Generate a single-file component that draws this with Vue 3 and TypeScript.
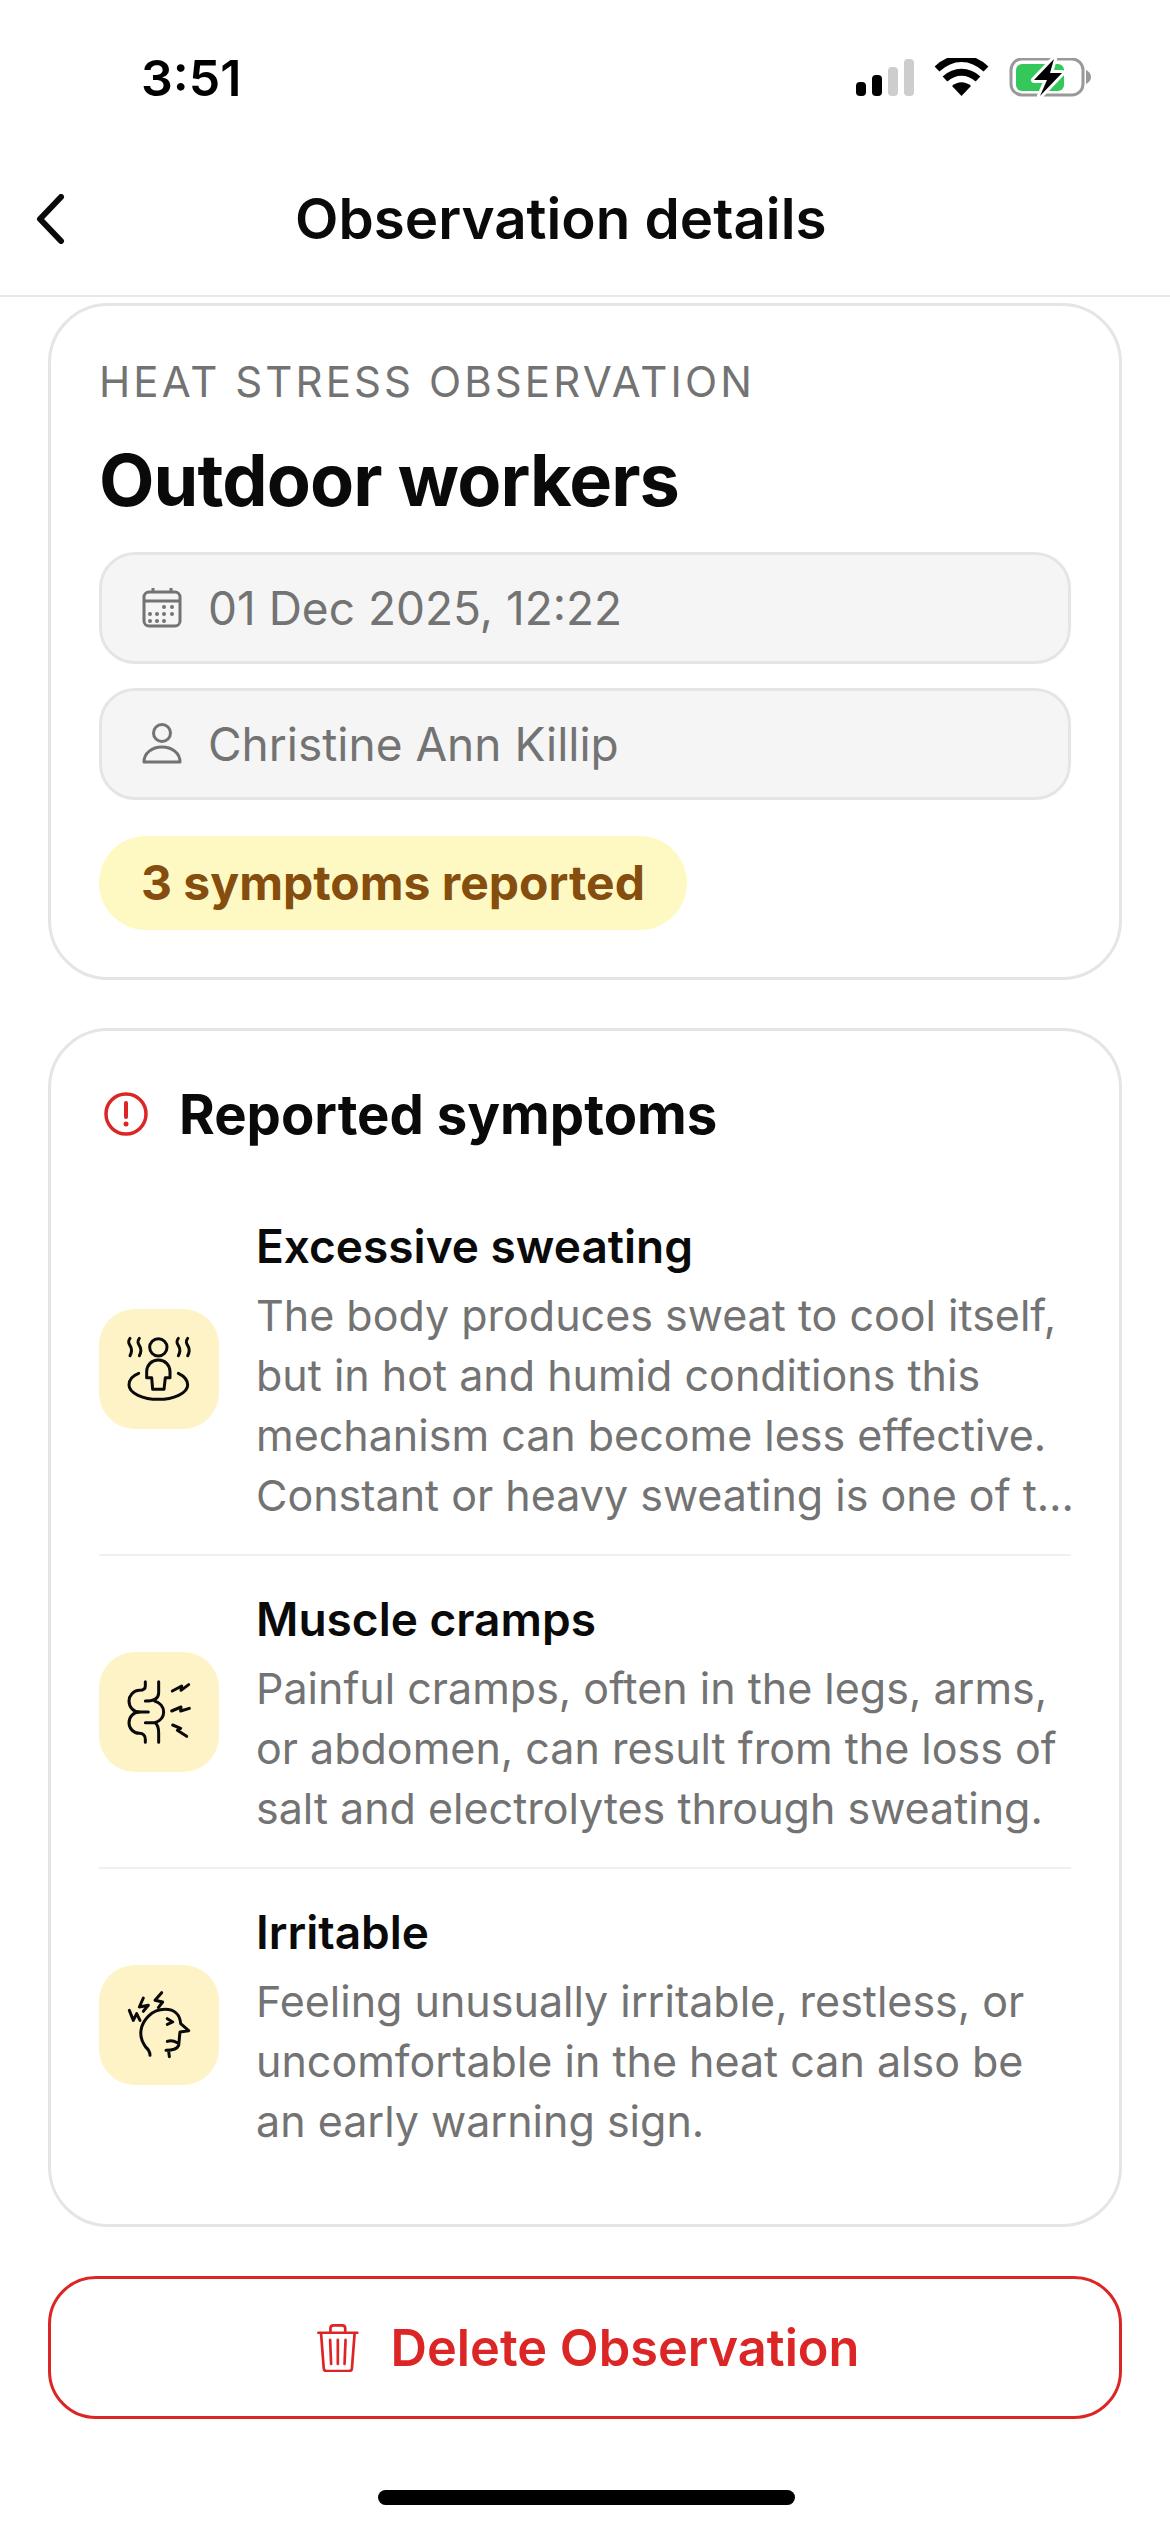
<template>
  <div class="screen">
    <div class="status">
      <span class="status__time">3:51</span>
      <svg class="status__icons" width="235" height="40" viewBox="856 58 235 40">
        <rect x="856" y="82" width="10" height="14" rx="4" fill="#000" />
        <rect x="872" y="75" width="10" height="21" rx="4" fill="#000" />
        <rect x="888" y="67" width="10" height="29" rx="4" fill="#cdcdcd" />
        <rect x="904" y="59" width="10" height="37" rx="4" fill="#cdcdcd" />
        <path d="M937 69 C952 55 971 55 986 69 M945 79 C955 70 968 70 978 79" fill="none" stroke="#000" stroke-width="7" />
        <path d="M952 86 C958 81 965 81 971 86 L961.500 96 Z" fill="#000" />
        <rect x="1011" y="59" width="72" height="36" rx="11" fill="none" stroke="#999" stroke-width="3" />
        <path d="M1086 70 C1090 72 1091 75 1091 77 C1091 79 1090 82 1086 84 Z" fill="#999" />
        <rect x="1016" y="64" width="48" height="27" rx="6" fill="#34c759" />
        <path d="M1054 59 L1034 80 H1047 L1040 96 L1062 73 H1050 Z" fill="#000" stroke="#fff" stroke-width="6" paint-order="stroke" stroke-linejoin="round" />
      </svg>
    </div>

    <header class="nav">
      <svg class="nav__back" width="30" height="50" viewBox="0 0 30 50">
        <path d="M26 3 L5 25 L26 47" fill="none" stroke="#0a0a0a" stroke-width="6" stroke-linecap="round" stroke-linejoin="round" />
      </svg>
      <h1 class="nav__title">Observation details</h1>
    </header>

    <main class="content">
      <section class="card card--summary">
        <div class="eyebrow">HEAT STRESS OBSERVATION</div>
        <h2 class="name">Outdoor workers</h2>
        <div class="field">
          <svg width="42" height="42" viewBox="0 0 42 42" fill="none" stroke="#737373" stroke-width="3">
            <rect x="3" y="5" width="36" height="34" rx="5" />
            <path d="M3 14 H39 M12 1 V6 M30 1 V6" />
            <g fill="#737373" stroke="none">
              <circle cx="23" cy="20" r="2" /><circle cx="31" cy="20" r="2" />
              <circle cx="9" cy="27" r="2" /><circle cx="16" cy="27" r="2" /><circle cx="23" cy="27" r="2" /><circle cx="31" cy="27" r="2" />
              <circle cx="9" cy="34" r="2" /><circle cx="16" cy="34" r="2" /><circle cx="23" cy="34" r="2" />
            </g>
          </svg>
          <span>01 Dec 2025, 12:22</span>
        </div>
        <div class="field">
          <svg width="42" height="42" viewBox="0 0 42 42" fill="none" stroke="#737373" stroke-width="3">
            <circle cx="21" cy="10" r="8.500" />
            <path d="M3 39 C3 30 11 24 21 24 C31 24 39 30 39 39 Z" stroke-linejoin="round" />
          </svg>
          <span>Christine Ann Killip</span>
        </div>
        <div class="badge">3 symptoms reported</div>
      </section>

      <section class="card card--symptoms">
        <div class="heading">
          <svg width="44" height="44" viewBox="0 0 44 44" fill="none">
            <circle cx="22" cy="22" r="20" stroke="#dc2626" stroke-width="3.500" />
            <path d="M22 11 V25" stroke="#dc2626" stroke-width="4" stroke-linecap="round" />
            <circle cx="22" cy="32" r="2.500" fill="#dc2626" />
          </svg>
          <h3>Reported symptoms</h3>
        </div>

        <div v-for="item in symptoms" :key="item.title" class="symptom">
          <div class="symptom__icon">
            <svg v-if="item.icon === 'sweat'" width="120" height="120" viewBox="57 57 360 360" v-bind="iconAttrs">
              <circle cx="235" cy="172" r="26" />
              <path d="M218 298 L215 263 H200 V245 C200 225 215 210 235 210 C255 210 270 225 270 245 V263 H256 L252 298 Z" />
              <path d="M176 250 C155 258 147 272 147 285 C147 310 190 328 235 328 C280 328 323 310 323 285 C323 272 312 258 295 250" />
              <path d="M150 145 C142 155 147 162 152 170 C157 180 155 188 150 197 M178 145 C170 155 175 162 180 170 C185 180 183 188 178 197" />
              <path d="M295 145 C287 155 292 162 297 170 C302 180 300 188 295 197 M323 145 C315 155 320 162 325 170 C330 180 328 188 323 197" />
            </svg>
            <svg v-else-if="item.icon === 'cramp'" width="120" height="120" viewBox="57 33 360 360" v-bind="iconAttrs">
              <path d="M196 122 V135 C196 145 188 148 178 148 C160 148 147 165 147 180 C147 198 160 213 178 213 H205" />
              <path d="M178 213 C160 213 147 228 147 245 C147 262 160 277 178 277 C190 277 196 285 196 295 V304" />
              <path d="M236 122 V155 C236 172 220 180 196 180 M224 180 C240 185 251 198 251 213 C251 228 240 240 225 245 H196 M225 245 C232 250 236 262 236 275 V304" />
              <path d="M277 150 L305 135 L303 148 L326 131 M275 210 L303 198 L302 210 L328 202 M278 252 L302 262 L292 268 L320 286" />
            </svg>
            <svg v-else width="120" height="120" viewBox="57 39 360 360" v-bind="iconAttrs">
              <path d="M210 310 C210 298 205 292 197 285 C186 270 180 255 183 235 C187 205 215 172 255 172 C285 172 300 190 302 215 L326 236 L300 240 C298 255 298 265 296 280 C290 295 270 295 258 295 M268 314 L266 297" />
              <path d="M262 200 L278 210 L262 217 M262 268 C272 264 282 266 292 272" />
              <path d="M148 175 L160 205 L170 185 L180 205 M190 138 L178 165 L205 160 L190 178 M245 122 L225 145 L248 150 L235 167" />
            </svg>
          </div>
          <div class="symptom__text">
            <div class="symptom__title">{{ item.title }}</div>
            <p class="symptom__desc">{{ item.desc }}</p>
          </div>
        </div>
      </section>

      <button class="delete">
        <svg width="42" height="48" viewBox="118 133 125 143" fill="none" stroke="#dc2626" stroke-width="8" stroke-linecap="round" stroke-linejoin="round">
          <path d="M122 159 H238 M130 160 L138 265 C138 270 142 273 147 273 H213 C218 273 222 270 222 265 L230 160" />
          <path d="M158 158 V146 C158 140 162 137 167 137 H193 C198 137 202 140 202 146 V158" />
          <path d="M157 180 L160 252 M180 180 V252 M203 180 L200 252" />
        </svg>
        <span>Delete Observation</span>
      </button>
    </main>

    <div class="home"></div>
  </div>
</template>

<script setup lang="ts">
interface ISymptom {
  title: string
  desc: string
  icon: 'sweat' | 'cramp' | 'irritable'
}

const iconAttrs = {
  fill: 'none',
  stroke: '#0a0a0a',
  'stroke-width': 9,
  'stroke-linecap': 'round',
  'stroke-linejoin': 'round',
}

const symptoms: ISymptom[] = [
  {
    title: 'Excessive sweating',
    desc: 'The body produces sweat to cool itself, but in hot and humid conditions this mechanism can become less effective. Constant or heavy sweating is one of t…',
    icon: 'sweat',
  },
  {
    title: 'Muscle cramps',
    desc: 'Painful cramps, often in the legs, arms, or abdomen, can result from the loss of salt and electrolytes through sweating.',
    icon: 'cramp',
  },
  {
    title: 'Irritable',
    desc: 'Feeling unusually irritable, restless, or uncomfortable in the heat can also be an early warning sign.',
    icon: 'irritable',
  },
]
</script>

<style>
html,
body {
  background: #fff;
}
</style>

<style scoped>
.screen {
  width: 1170px;
  height: 2532px;
  overflow: hidden;
  background: #fff;
  font-family: Inter, "Liberation Sans", sans-serif;
  color: #0a0a0a;
}
.status {
  height: 156px;
  display: flex;
  justify-content: space-between;
  align-items: flex-start;
  padding: 48px 79px 0 141px;
  box-sizing: border-box;
}
.status__time {
  font-size: 50px;
  line-height: 60px;
  font-weight: 600;
  color: #000;
}
.status__icons {
  margin-top: 10px;
}
.nav {
  height: 141px;
  box-sizing: border-box;
  border-bottom: 2px solid #e8e8e8;
  display: flex;
  align-items: flex-start;
  gap: 230px;
  padding: 38px 0 0 35px;
}
.nav__title {
  margin: 0;
  font-size: 56.500px;
  line-height: 50px;
  font-weight: 600;
}
.content {
  padding: 6px 48px 0;
  display: flex;
  flex-direction: column;
}
.card {
  border: 3px solid #e5e5e5;
  border-radius: 60px;
  box-sizing: border-box;
}
.card--summary {
  height: 677px;
  padding: 48px 48px 0;
}
.eyebrow {
  font-size: 42px;
  line-height: 56px;
  letter-spacing: 3.100px;
  color: #737373;
}
.name {
  margin: 26px 0 28px;
  font-size: 72px;
  line-height: 88px;
  font-weight: 700;
  letter-spacing: -0.900px;
}
.field {
  height: 112px;
  box-sizing: border-box;
  border: 3px solid #e5e5e5;
  border-radius: 36px;
  background: #f5f5f5;
  display: flex;
  align-items: center;
  gap: 25px;
  padding: 0 39px;
  margin-bottom: 24px;
  font-size: 46px;
  color: #737373;
}
.badge {
  display: inline-block;
  margin-top: 12px;
  padding: 0 42px;
  height: 94px;
  line-height: 94px;
  border-radius: 47px;
  background: #fef9c3;
  color: #854d0e;
  font-size: 48px;
  font-weight: 700;
}
.card--symptoms {
  margin-top: 48px;
  height: 1199px;
  padding: 50px 48px 0;
}
.heading {
  display: flex;
  align-items: center;
  gap: 31px;
  padding-left: 5px;
  height: 66px;
  margin-bottom: 36px;
}
.heading h3 {
  margin: 0;
  font-size: 54.500px;
  line-height: 66px;
  font-weight: 700;
}
.symptom {
  display: flex;
  align-items: center;
  gap: 37px;
  padding: 30px 0 29px;
  border-bottom: 2px solid #f0f0f0;
}
.symptom:last-child {
  border-bottom: none;
}
.symptom__icon {
  flex: none;
  width: 120px;
  height: 120px;
  border-radius: 36px;
  background: #fef3c7;
  display: flex;
}
.symptom__text {
  margin-right: -8px;
}
.symptom__title {
  font-size: 46px;
  line-height: 66px;
  font-weight: 600;
}
.symptom__desc {
  margin: 6px 0 0;
  font-size: 43px;
  line-height: 60px;
  color: #737373;
}
.delete {
  margin-top: 49px;
  height: 143px;
  border: 3px solid #dc2626;
  border-radius: 48px;
  background: #fff;
  display: flex;
  align-items: center;
  justify-content: center;
  gap: 32px;
  font-family: inherit;
  font-size: 50.500px;
  font-weight: 600;
  color: #dc2626;
  padding: 0 0 0 6px;
}
.home {
  width: 417px;
  height: 15px;
  border-radius: 8px;
  background: #000;
  margin: 71px 0 0 378px;
}
</style>
